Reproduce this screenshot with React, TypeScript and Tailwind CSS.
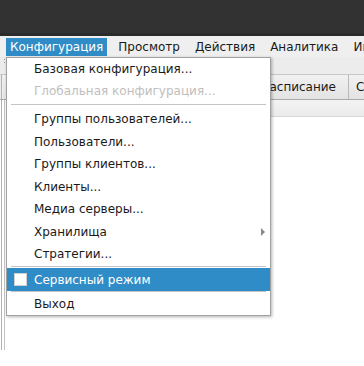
import React from 'react';

const MenuItem = ({ label, h, disabled, arrow }: { label: string; h: string; disabled?: boolean; arrow?: boolean }) => (
  <div className={`${h} flex items-center justify-between pl-[27px] pr-[5px] ${disabled ? 'text-[#bebebe]' : 'text-[#1a1a1a]'}`}>
    <span>{label}</span>
    {arrow && (
      <span className="w-0 h-0 border-y-[4px] border-l-[4px] border-y-transparent border-l-[#8a8a8a]" />
    )}
  </div>
);

const Separator = ({ className }: { className: string }) => (
  <div className={`mx-[4px] h-px bg-[#c4c4c4] ${className}`} />
);

const App = () => {
  const menubar = ['Конфигурация', 'Просмотр', 'Действия', 'Аналитика', 'Инструменты'];

  return (
    <div className="relative w-[364px] h-[366px] overflow-hidden bg-white font-['DejaVu_Sans',sans-serif] text-[12px] leading-none">
      {/* window title bar */}
      <div className="h-[36px] bg-[#323232] border-b-[3px] border-[#2b2b2b]" />

      {/* menu bar */}
      <div className="h-[21px] bg-[#efefef] flex items-start pt-[2px] pl-[6px] gap-[7px] whitespace-nowrap overflow-hidden">
        {menubar.map((m, i) => (
          <div
            key={m}
            className={`shrink-0 h-[18px] px-[4px] flex items-center ${i === 0 ? 'bg-[#308cc6] text-white' : 'text-[#1a1a1a]'}`}
          >
            {m}
          </div>
        ))}
      </div>

      {/* toolbar strip */}
      <div className="h-[18px] bg-[#ececec] border-b border-[#c6c6c6] pl-[4px] flex items-start pt-[2px]">
        <div className="flex flex-col gap-[2px]">
          <span className="w-px h-px bg-[#9a9a9a]" />
          <span className="w-px h-px bg-[#9a9a9a]" />
        </div>
      </div>

      {/* tab row */}
      <div className="h-[25px] bg-[#ececec] border-b border-[#a9a9a9] flex whitespace-nowrap overflow-hidden">
        <div className="shrink-0 w-[2px] border-l border-[#b4b4b4] ml-[1px]" />
        <div className="shrink-0 w-[346px] flex items-center justify-end pr-[12px] bg-gradient-to-b from-[#f1f1f1] to-[#e3e3e3] border-r border-[#b8b8b8] text-[#1a1a1a]">
          Расписание
        </div>
        <div className="shrink-0 w-[120px] flex items-center pl-[7px] bg-gradient-to-b from-[#f1f1f1] to-[#e3e3e3] text-[#1a1a1a]">
          Статистика
        </div>
      </div>

      {/* body */}
      <div className="flex h-[250px]">
        <div className="w-[6px] flex">
          <div className="ml-[1px] w-px bg-[#b0b0b0]" />
          <div className="ml-[2px] w-px bg-[#c4c4c4]" />
        </div>
        <div className="flex-1 flex flex-col">
          <div className="h-[17px] bg-gradient-to-b from-[#f3f3f3] to-[#ebebeb] border-b border-[#d8d8d8]" />
          <div className="flex-1 bg-white" />
        </div>
      </div>

      {/* open dropdown */}
      <div className="absolute left-[6px] top-[57px] w-[265px] bg-white border border-[#a2a2a2] shadow-[1px_1px_3px_rgba(0,0,0,0.3)] whitespace-nowrap">
        <MenuItem label="Базовая конфигурация..." h="h-[22px]" />
        <MenuItem label="Глобальная конфигурация..." h="h-[22px]" disabled />
        <Separator className="mt-[2px] mb-[2px]" />
        <MenuItem label="Группы пользователей..." h="h-[23px]" />
        <MenuItem label="Пользователи..." h="h-[23px]" />
        <MenuItem label="Группы клиентов..." h="h-[22px]" />
        <MenuItem label="Клиенты..." h="h-[23px]" />
        <MenuItem label="Медиа серверы..." h="h-[22px]" />
        <MenuItem label="Хранилища" h="h-[23px]" arrow />
        <MenuItem label="Стратегии..." h="h-[22px]" />
        <Separator className="mt-px mb-px" />
        <div className="h-[23px] bg-[#308cc6] text-white flex items-center pl-[7px]">
          <span className="w-[13px] h-[13px] bg-white border border-[#d0d0d0] mr-[7px]" />
          <span>Сервисный режим</span>
        </div>
        <Separator className="mb-px" />
        <MenuItem label="Выход" h="h-[22px]" />
      </div>
    </div>
  );
};

export default App;
